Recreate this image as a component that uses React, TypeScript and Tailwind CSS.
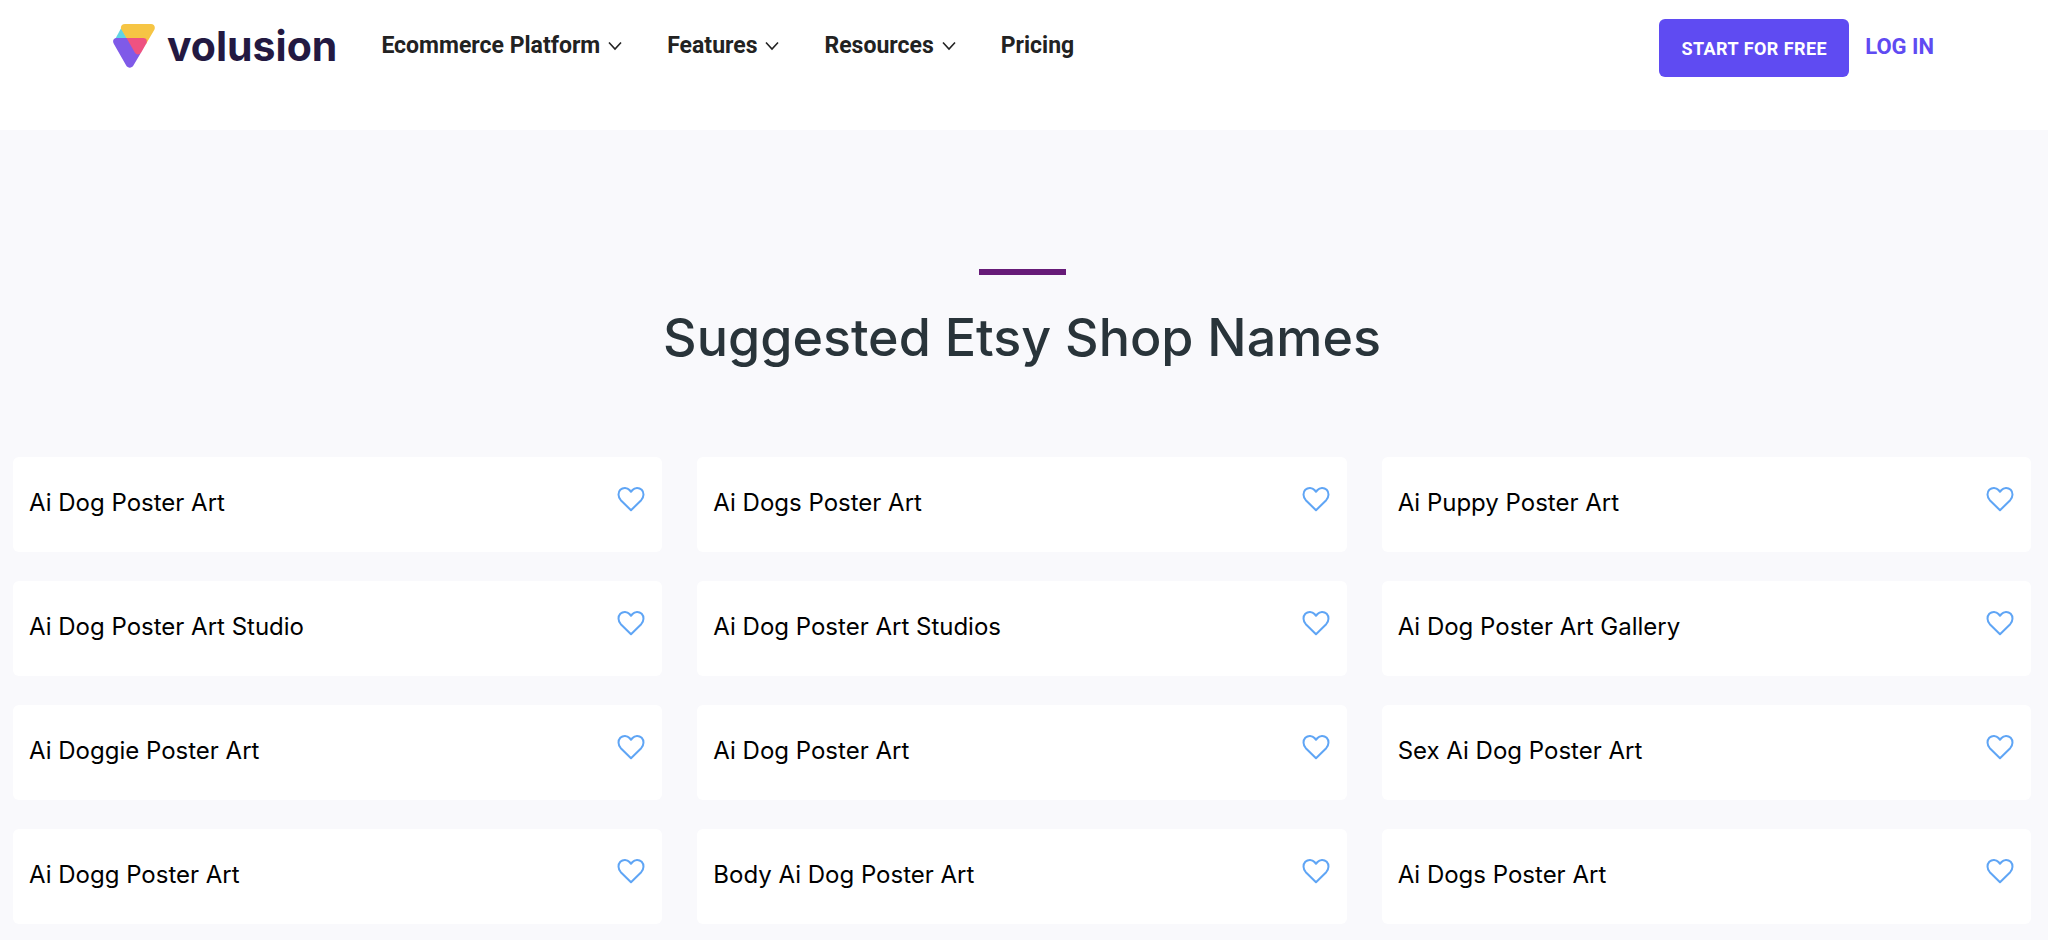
import { useState } from "react"
import { clsx } from "clsx"

const NAV_ITEMS = [
  { label: "Ecommerce Platform", hasMenu: true },
  { label: "Features", hasMenu: true },
  { label: "Resources", hasMenu: true },
  { label: "Pricing", hasMenu: false },
]

const SHOP_NAMES = [
  "Ai Dog Poster Art",
  "Ai Dogs Poster Art",
  "Ai Puppy Poster Art",
  "Ai Dog Poster Art Studio",
  "Ai Dog Poster Art Studios",
  "Ai Dog Poster Art Gallery",
  "Ai Doggie Poster Art",
  "Ai Dog Poster Art",
  "Sex Ai Dog Poster Art",
  "Ai Dogg Poster Art",
  "Body Ai Dog Poster Art",
  "Ai Dogs Poster Art",
]

function Logo() {
  return (
    <a href="#" className="flex items-center gap-3 text-[#231942]">
      <svg viewBox="0 0 42 44" className="h-11 w-[42px]" aria-hidden="true">
        <path d="M8.2 4L14.5 15H2.2Z" fill="#62d3e3" />
        <path
          d="M12 0H38C41.2 0 42.8 3 41.2 6L33 20 27.5 15H14L8.4 5.6C7 3 8.6 0 12 0Z"
          fill="#f6c544"
        />
        <path
          d="M3.6 14H14L27.5 29.5 20.4 41.6C18.8 44.4 14.8 44.4 13.2 41.6L.9 20C-.9 17 .4 14 3.6 14Z"
          fill="#7f5ae8"
        />
        <path d="M13.5 14H30.4C33.6 14 34.8 17 33.2 19.8L28.2 28.6C26.7 31.2 23.2 31.2 21.8 28.6Z" fill="#ee5281" />
      </svg>
      <span className="font-['Inter',sans-serif] text-[41px] leading-[42px] font-bold">volusion</span>
    </a>
  )
}

function Chevron() {
  return (
    <svg viewBox="0 0 14 10" className="h-[10px] w-[14px]" fill="none" aria-hidden="true">
      <path d="M1 1.5L7 8L13 1.5" stroke="#222" strokeWidth="1.6" />
    </svg>
  )
}

function NameCard({ name }: { name: string }) {
  const [liked, setLiked] = useState(false)

  return (
    <li className="flex h-[95px] items-center justify-between rounded-md bg-white pr-[17px] pb-[3px] pl-4">
      <span>{name}</span>
      <button
        type="button"
        aria-label={`Save ${name}`}
        aria-pressed={liked}
        onClick={() => setLiked(!liked)}
        className="mb-2 cursor-pointer"
      >
        <svg
          viewBox="0 0 28 26"
          className={clsx("h-[26px] w-7 stroke-[#5fa5f5]", liked ? "fill-[#5fa5f5]" : "fill-none")}
        >
          <path
            d="M14 24.3L3.8 14.2C.9 11 .8 6.4 3.3 3.8 6 1.2 10.2 1.4 12.5 4L14 5.8 15.5 4C17.8 1.4 22 1.2 24.7 3.8 27.2 6.4 27.1 11 24.2 14.2Z"
            strokeWidth="2"
            strokeLinejoin="round"
          />
        </svg>
      </button>
    </li>
  )
}

export default function App() {
  return (
    <div className="min-h-screen bg-[#f9f9fc] font-['Inter',sans-serif]">
      {/* Header */}
      <header className="flex h-[130px] items-start justify-between bg-white pt-[19px] pr-[114px] pl-[113px] font-['Roboto',sans-serif]">
        <div className="flex items-center gap-11 pt-1">
          <Logo />
          <nav className="flex items-center gap-[45px]">
            {NAV_ITEMS.map((item) => (
              <a
                key={item.label}
                href="#"
                className="flex items-center gap-2 text-[23px] leading-[46px] font-bold text-[#222]"
              >
                {item.label}
                {item.hasMenu && <Chevron />}
              </a>
            ))}
          </nav>
        </div>

        <div className="flex items-start gap-4">
          <button
            type="button"
            className="h-[58px] rounded-md bg-[#5f4bf2] px-[22px] text-[18px] font-bold tracking-wide text-white"
          >
            START FOR FREE
          </button>
          <a href="#" className="text-[22px] leading-[56px] font-bold text-[#5f4bf2]">
            LOG IN
          </a>
        </div>
      </header>

      {/* Suggestions */}
      <main className="pt-[139px] pr-[17px] pb-4 pl-[13px]">
        <div className="mx-auto h-[6px] w-[87px] bg-[#671b78]" />
        <h1 className="mt-8 text-center text-[52px] leading-[62px] font-medium text-[#29343a]">
          Suggested Etsy Shop Names
        </h1>
        <ul className="mt-[88px] grid grid-cols-3 gap-x-[35px] gap-y-[29px] text-[24px] text-black">
          {SHOP_NAMES.map((name, i) => (
            <NameCard key={i} name={name} />
          ))}
        </ul>
      </main>
    </div>
  )
}
